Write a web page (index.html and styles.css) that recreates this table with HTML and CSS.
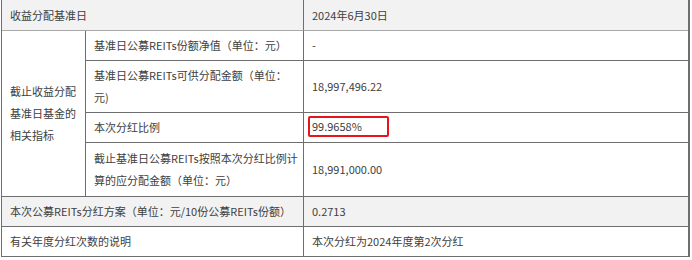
FILE: index.html
```html
<!DOCTYPE html>
<html lang="zh-CN">
<head>
<meta charset="utf-8">
<link rel="stylesheet" href="styles.css">
</head>
<body>
<div class="wrap">
<table class="info">
  <colgroup>
    <col class="c1"><col class="c2"><col class="c3">
  </colgroup>
  <tbody>
    <tr class="shade first">
      <td colspan="2">收益分配基准日</td>
      <td class="last">2024年6月30日</td>
    </tr>
    <tr>
      <td rowspan="4" class="group">截止收益分配基准日基金的相关指标</td>
      <td>基准日公募REITs份额净值（单位：元）</td>
      <td class="last">-</td>
    </tr>
    <tr>
      <td>基准日公募REITs可供分配金额（单位：<br>元)</td>
      <td class="last">18,997,496.22</td>
    </tr>
    <tr>
      <td>本次分红比例</td>
      <td class="last"><span class="mark">99.9658%</span></td>
    </tr>
    <tr class="tall">
      <td>截止基准日公募REITs按照本次分红比例计<br>算的应分配金额（单位：元）</td>
      <td class="last">18,991,000.00</td>
    </tr>
    <tr class="shade">
      <td colspan="2">本次公募REITs分红方案（单位：元/10份公募REITs份额）</td>
      <td class="last">0.2713</td>
    </tr>
    <tr>
      <td colspan="2">有关年度分红次数的说明</td>
      <td class="last">本次分红为2024年度第2次分红</td>
    </tr>
  </tbody>
</table>
</div>
</body>
</html>
```
FILE: styles.css
```css
html, body {
  margin: 0;
  padding: 0;
  background: #ffffff;
}
.wrap {
  padding-left: 1px;
}
.info {
  border-collapse: separate;
  border-spacing: 0;
  table-layout: fixed;
  width: 689px;
  border-left: 1px solid #6e6e6e;
  border-right: 2px solid #6e6e6e;
  font-family: "Noto Sans CJK SC", "Noto Sans", sans-serif;
  font-size: 11px;
  color: #404040;
}
.c1 { width: 84px; }
.c2 { width: 218px; }
.c3 { width: 384px; }
.info td {
  box-sizing: border-box;
  padding: 3px 8px 4px;
  line-height: 22px;
  vertical-align: middle;
  text-align: left;
  border-right: 1px solid #6e6e6e;
  border-bottom: 1px solid #6e6e6e;
  white-space: nowrap;
}
.info td.group {
  white-space: normal;
  word-break: break-all;
}
.info td.last {
  border-right: none;
}
.shade td {
  background: #f2f2f2;
}
.first td {
  padding-top: 4px;
  border-bottom-color: #a8a8a8;
}
.tall td {
  padding-top: 4px;
  padding-bottom: 5px;
}
.mark {
  display: inline-block;
  box-sizing: border-box;
  vertical-align: top;
  width: 81px;
  height: 21px;
  margin-left: -4px;
  padding-left: 2px;
  line-height: 17px;
  border: 2px solid #e8141c;
  border-radius: 2px;
}
```
